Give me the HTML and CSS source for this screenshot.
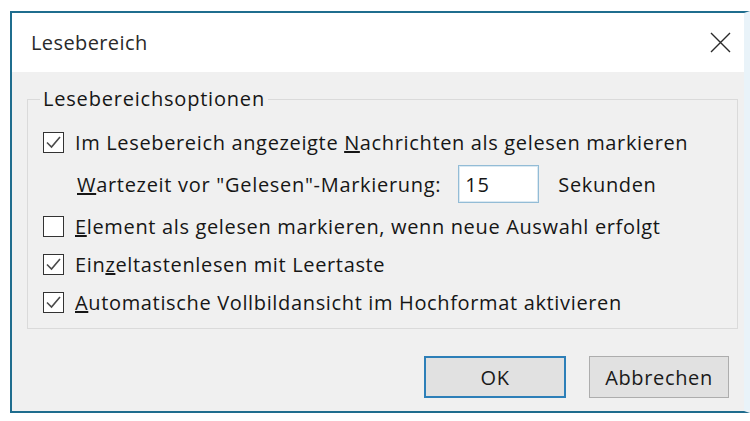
FILE: index.html
```html
<!DOCTYPE html>
<html lang="de">
<head>
    <meta charset="UTF-8">
    <meta name="viewport" content="width=device-width, initial-scale=1.0">
    <title>Lesebereich</title>
    <link rel="stylesheet" href="styles.css">
</head>
<body>
    <div class="dialog">
        <div class="titlebar">
            <span class="title">Lesebereich</span>
            <svg class="close" width="21" height="21" viewBox="0 0 21 21">
                <path d="M1 1 L20 20 M20 1 L1 20" stroke="#2a2a2a" stroke-width="1.4" fill="none"/>
            </svg>
        </div>

        <div class="content">
            <fieldset class="group">
                <legend>Lesebereichsoptionen</legend>

                <div class="row">
                    <span class="box"><svg width="19" height="19" viewBox="0 0 19 19"><path d="M3 9.5 L7.5 14 L16 4" stroke="#4a4a4a" stroke-width="1.6" fill="none"/></svg></span>
                    <span class="text">Im Lesebereich angezeigte <u>N</u>achrichten als gelesen markieren</span>
                </div>

                <div class="row row-wait">
                    <span class="wait-label"><u>W</u>artezeit vor "Gelesen"-Markierung:</span>
                    <span class="field">15</span>
                    <span class="unit">Sekunden</span>
                </div>

                <div class="row">
                    <span class="box"></span>
                    <span class="text"><u>E</u>lement als gelesen markieren, wenn neue Auswahl erfolgt</span>
                </div>

                <div class="row">
                    <span class="box"><svg width="19" height="19" viewBox="0 0 19 19"><path d="M3 9.5 L7.5 14 L16 4" stroke="#4a4a4a" stroke-width="1.6" fill="none"/></svg></span>
                    <span class="text">Ein<u>z</u>eltastenlesen mit Leertaste</span>
                </div>

                <div class="row">
                    <span class="box"><svg width="19" height="19" viewBox="0 0 19 19"><path d="M3 9.5 L7.5 14 L16 4" stroke="#4a4a4a" stroke-width="1.6" fill="none"/></svg></span>
                    <span class="text"><u>A</u>utomatische Vollbildansicht im Hochformat aktivieren</span>
                </div>
            </fieldset>

            <div class="buttons">
                <button class="btn btn-default">OK</button>
                <button class="btn btn-cancel">Abbrechen</button>
            </div>
        </div>
    </div>
</body>
</html>
```

FILE: styles.css
```css
/* Page */
body {
    margin: 0;
    background-color: #ffffff;
    font-family: "Open Sans", "Noto Sans", sans-serif;
    font-size: 20px;
    letter-spacing: 0.65px;
    color: #161616;
}

/* Dialog window */
.dialog {
    box-sizing: border-box;
    height: 402px;
    margin: 11px 0 0 10px;
    border: 2px solid #1f6d8e;
    border-right: 6px solid #e9f3f9;
    display: flex;
    flex-direction: column;
}

.titlebar {
    height: 59px;
    flex-shrink: 0;
    display: flex;
    align-items: center;
    padding-left: 19px;
    padding-right: 13px;
    background-color: #ffffff;
}

.title {
    color: #2a2a2a;
    letter-spacing: 0.4px;
}

.close {
    margin-left: auto;
}

.content {
    flex: 1;
    background-color: #f0f0f0;
    padding: 14px 6px 0 15px;
    display: flex;
    flex-direction: column;
}

/* Group box */
.group {
    margin: 0;
    border: 1px solid #dadada;
    padding: 12px 10px 8px 15px;
}

.group legend {
    padding: 0 3px;
    margin-left: -3px;
    line-height: 26px;
    letter-spacing: 0.8px;
}

.row {
    height: 36px;
    display: flex;
    align-items: center;
}

.row + .row {
    margin-top: 2px;
}

.row-wait {
    height: 44px;
}

.box {
    box-sizing: border-box;
    width: 21px;
    height: 21px;
    border: 1px solid #333333;
    background-color: #ffffff;
    display: flex;
    align-items: center;
    justify-content: center;
    flex-shrink: 0;
}

.text {
    margin-left: 11px;
    white-space: nowrap;
}

.wait-label {
    margin-left: 34px;
    white-space: nowrap;
    letter-spacing: 0.7px;
}

.field {
    box-sizing: border-box;
    width: 81px;
    height: 38px;
    margin-left: 17px;
    padding-left: 6px;
    border: 1px solid #93bcd6;
    box-shadow: inset 0 0 0 1px #dbe9f2;
    background-color: #ffffff;
    display: flex;
    align-items: center;
}

.unit {
    margin-left: 19px;
}

/* Buttons */
.buttons {
    display: flex;
    justify-content: flex-end;
    gap: 23px;
    margin-top: 27px;
    padding-right: 9px;
}

.btn {
    box-sizing: border-box;
    height: 42px;
    font-family: inherit;
    font-size: 20px;
    letter-spacing: 0.65px;
    color: #1a1a1a;
    background-color: #e1e1e1;
    border: 1px solid #adadad;
    padding: 0;
}

.btn-default {
    width: 142px;
    border: 2px solid #2d7fb8;
}

.btn-cancel {
    width: 140px;
}
```
